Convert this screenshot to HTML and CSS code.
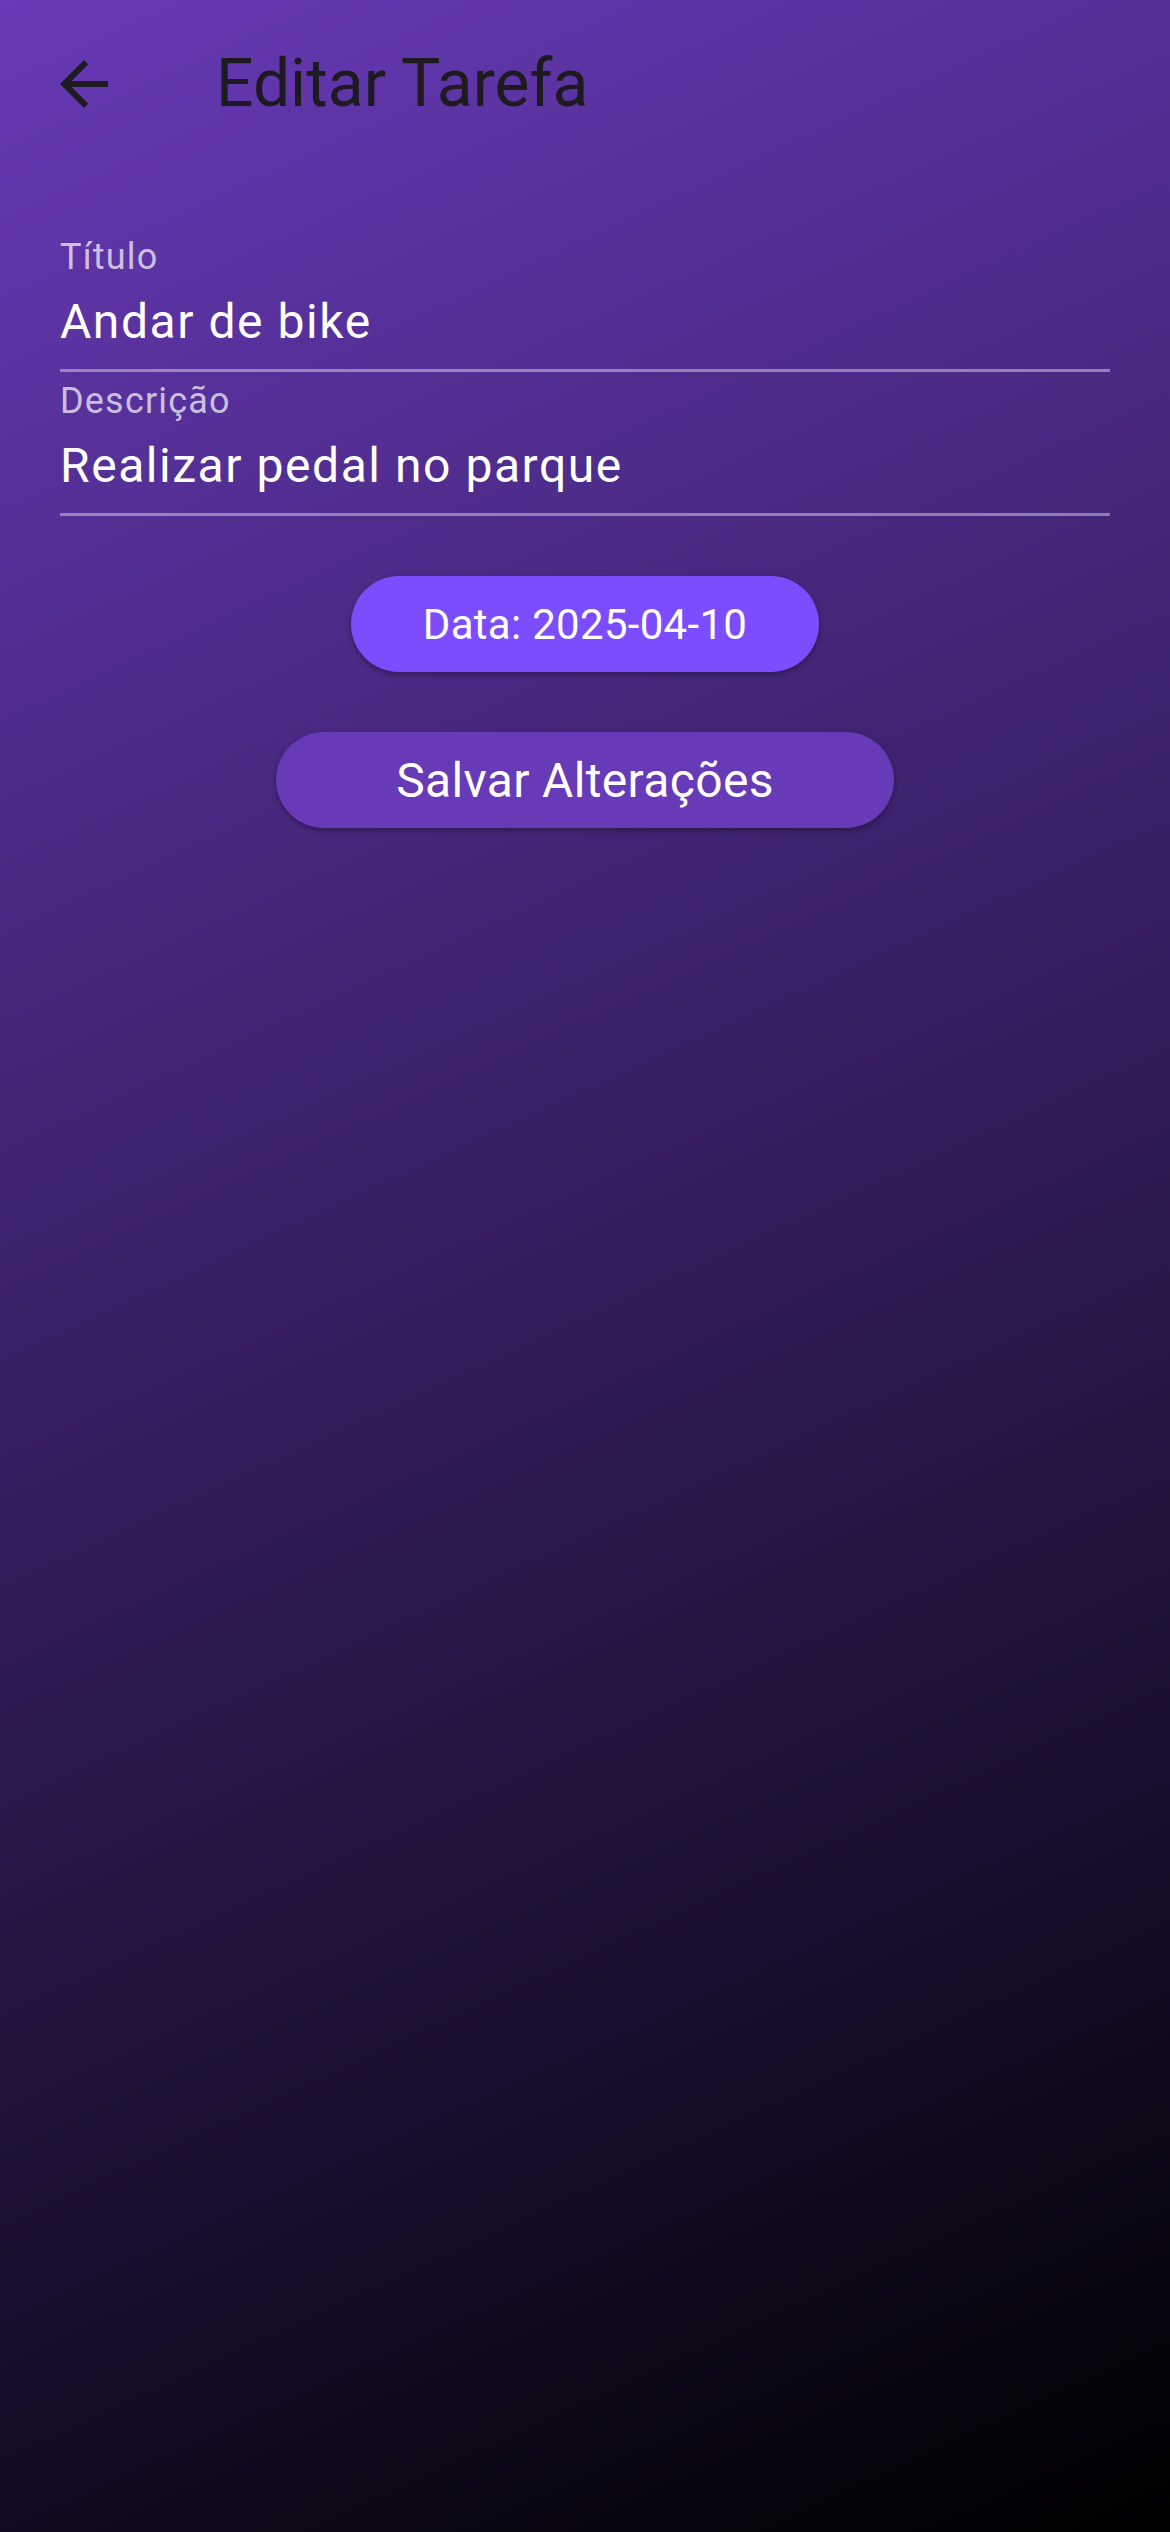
FILE: index.html
```html
<!DOCTYPE html>
<html lang="pt">
<head>
<meta charset="utf-8">
<title>Editar Tarefa</title>
<link rel="stylesheet" href="styles.css">
</head>
<body>
<div class="screen">
  <header class="appbar">
    <div class="leading">
      <svg class="back-icon" viewBox="0 0 24 24" width="72" height="72" aria-hidden="true">
        <path d="M20 11H7.83l5.59-5.59L12 4l-8 8 8 8 1.41-1.41L7.83 13H20v-2z" fill="#1d1b20"/>
      </svg>
    </div>
    <h1 class="title">Editar Tarefa</h1>
  </header>
  <main class="content">
    <div class="field">
      <div class="field-label">Título</div>
      <div class="field-input">Andar de bike</div>
    </div>
    <div class="field">
      <div class="field-label">Descrição</div>
      <div class="field-input">Realizar pedal no parque</div>
    </div>
    <div class="actions">
      <button class="btn btn-date">Data: 2025-04-10</button>
      <button class="btn btn-save">Salvar Alterações</button>
    </div>
  </main>
</div>
</body>
</html>
```

FILE: styles.css
```css
html, body {
  margin: 0;
  padding: 0;
}

body {
  font-family: Roboto, "Noto Sans", "Liberation Sans", sans-serif;
  background: #000;
}

.screen {
  width: 1170px;
  height: 2532px;
  background: linear-gradient(155.2deg, #673ab7 0%, #000000 100%);
  display: flex;
  flex-direction: column;
}

.appbar {
  height: 168px;
  display: flex;
  align-items: center;
}

.leading {
  width: 168px;
  height: 168px;
  display: flex;
  align-items: center;
  justify-content: center;
}

.back-icon {
  display: block;
}

.title {
  margin: 0 0 0 48px;
  font-size: 66px;
  font-weight: 400;
  color: #1d1b20;
  line-height: 84px;
  letter-spacing: 0;
}

.content {
  padding: 60px;
  display: flex;
  flex-direction: column;
}

.field {
  padding-top: 5px;
  padding-bottom: 19px;
  border-bottom: 3px solid rgba(255, 255, 255, 0.4);
}

.field-label {
  font-size: 36px;
  line-height: 48px;
  color: rgba(255, 255, 255, 0.7);
  letter-spacing: 1.2px;
}

.field-input {
  margin-top: 13px;
  font-size: 48px;
  line-height: 56px;
  color: #ffffff;
  letter-spacing: 1.55px;
}

.actions {
  display: flex;
  flex-direction: column;
  align-items: center;
  gap: 60px;
  margin-top: 60px;
}

.btn {
  border: none;
  height: 96px;
  border-radius: 48px;
  color: #ffffff;
  font-family: Roboto, "Noto Sans", "Liberation Sans", sans-serif;
  font-weight: 400;
  box-shadow: 0 3px 4px rgba(0, 0, 0, 0.22), 0 1px 8px rgba(0, 0, 0, 0.12);
  cursor: pointer;
}

.btn-date {
  background: #7c4dff;
  font-size: 42px;
  padding: 0 72px;
  letter-spacing: 0.3px;
}

.btn-save {
  background: #673ab7;
  font-size: 48px;
  padding: 0 120px;
  letter-spacing: 0.35px;
}
```
